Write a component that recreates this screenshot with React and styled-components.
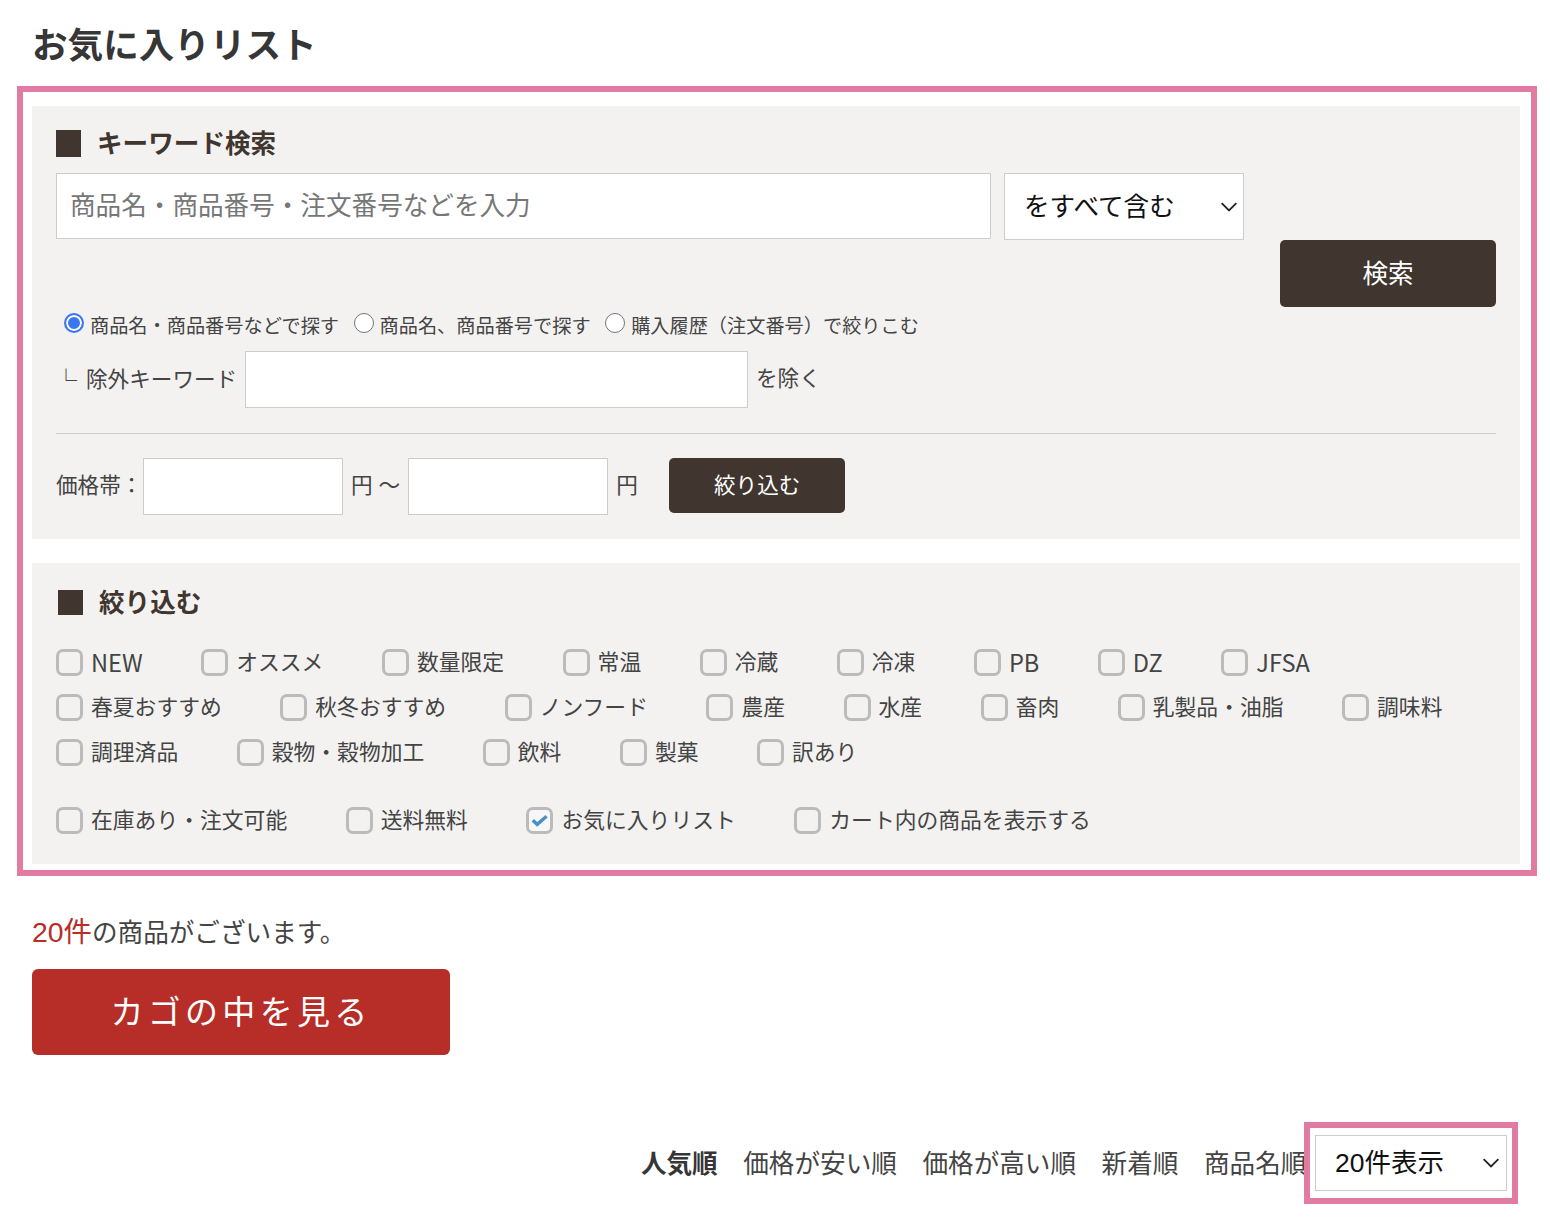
import React from "react";
import styled, { createGlobalStyle } from "styled-components";

const GlobalStyle = createGlobalStyle`
	html, body {
		margin: 0;
		padding: 0;
		background: #fff;
		color: #444;
		font-family: "Liberation Sans", "Noto Sans CJK JP", sans-serif;
	}
	* {
		box-sizing: border-box;
	}
`;

const Page = styled.div`
	width: 1550px;
	height: 1222px;
	overflow: hidden;
`;

const Title = styled.h1`
	margin: 0;
	padding-left: 32px;
	height: 86px;
	font-size: 35.6px;
	line-height: 92px;
	font-weight: 700;
	color: #363636;
`;

const PinkFrame = styled.div`
	margin-left: 17px;
	width: 1520px;
	height: 790px;
	border: 6px solid #e27ba1;
	padding: 14px 11px 6px 9px;
`;

const Panel = styled.section`
	background: #f3f2f0;
	padding: ${(p) => p.$padding};
	height: ${(p) => p.$height};
	margin-bottom: 24px;
`;

const Heading = styled.h2`
	display: flex;
	align-items: flex-start;
	gap: 16px;
	margin: 0;
	height: 28px;
	font-size: 25.6px;
	line-height: 28px;
	font-weight: 700;
	color: #40362f;
	&::before {
		content: "";
		width: 25px;
		height: ${(p) => p.$squareH};
		background: #40362f;
		margin-left: ${(p) => p.$indent || 0};
		margin-top: ${(p) => p.$squareTop || 0};
	}
`;

const SearchArea = styled.div`
	display: flex;
	gap: 36px;
	margin-top: 15px;
`;

const SearchLeft = styled.div`
	width: 1188px;
`;

const InputRow = styled.div`
	display: flex;
	gap: 13px;
	align-items: flex-start;
`;

const TextBox = styled.input`
	display: block;
	width: ${(p) => p.$width};
	height: ${(p) => p.$height};
	border: 1px solid #ccc;
	background: #fff;
	padding: 0 13px;
	font: inherit;
	font-size: 25.6px;
	color: #333;
	border-radius: 0;
	outline: none;
	&::placeholder {
		color: #777;
		opacity: 1;
	}
`;

const SelectWrap = styled.div`
	position: relative;
	width: ${(p) => p.$width};
	height: ${(p) => p.$height};
	svg {
		position: absolute;
		right: ${(p) => p.$arrowRight};
		top: 50%;
		transform: translateY(-50%);
		pointer-events: none;
	}
`;

const SelectBox = styled.select`
	appearance: none;
	width: 100%;
	height: 100%;
	border: 1px solid #ccc;
	border-radius: 0;
	background: #fff;
	padding: 0 0 0 19px;
	font: inherit;
	font-size: ${(p) => p.$size};
	color: #111;
	outline: none;
`;

const DarkButton = styled.button`
	flex: none;
	align-self: flex-start;
	width: ${(p) => p.$width};
	height: ${(p) => p.$height};
	margin-top: ${(p) => p.$top || 0};
	margin-left: ${(p) => p.$left || 0};
	border: none;
	border-radius: 5px;
	background: #40362f;
	color: #fff;
	font: inherit;
	font-size: ${(p) => p.$size};
	padding: 0 0 4px;
`;

const RadioRow = styled.div`
	display: flex;
	align-items: center;
	gap: 14.5px;
	padding-left: 8px;
	margin-top: 69px;
	height: 32px;
	font-size: 19.2px;
`;

const RadioLabel = styled.label`
	display: flex;
	align-items: center;
	gap: 6px;
`;

const Radio = styled.input.attrs({ type: "radio" })`
	appearance: none;
	flex: none;
	width: 20px;
	height: 20px;
	margin: 0 0 5px;
	border-radius: 50%;
	background: #fff;
	border: 1px solid #767676;
	&:checked {
		border: 2px solid #3a76f0;
		box-shadow: inset 0 0 0 2px #fff;
		background: #3a76f0;
	}
`;

const ExcludeRow = styled.div`
	display: flex;
	align-items: center;
	margin-top: 10px;
	font-size: 21.6px;
	height: 57px;
`;

const Corner = styled.span`
	width: 30px;
	margin-left: -1px;
	margin-right: 1px;
	margin-bottom: 4px;
	font-family: "Noto Sans CJK JP", sans-serif;
	font-size: 22px;
	line-height: 1;
`;

const ExcludeLabel = styled.span`
	width: 159px;
	padding-bottom: 5px;
	white-space: nowrap;
`;

const Suffix = styled.span`
	margin-left: 8px;
	padding-bottom: 6px;
`;

const Divider = styled.hr`
	margin: 25px 0 24px;
	border: none;
	border-top: 1px solid #ccc;
`;

const PriceRow = styled.div`
	display: flex;
	align-items: center;
	font-size: 21.6px;
	height: 57px;
`;

const PriceLabel = styled.span`
	width: 87px;
	padding-bottom: 6px;
	white-space: nowrap;
`;

const Between = styled.span`
	margin: 0 8px;
	padding-bottom: 6px;
	white-space: nowrap;
`;

const CheckRow = styled.div`
	display: flex;
	gap: 58.5px;
	margin-top: ${(p) => p.$top};
	height: 32px;
	align-items: center;
	font-size: 21.8px;
`;

const CheckLabel = styled.label`
	display: flex;
	align-items: center;
	gap: 8px;
	white-space: nowrap;
`;

const CheckName = styled.span`
	padding-bottom: 3px;
`;

const LatinName = styled.span`
	font-family: "Noto Sans CJK JP", sans-serif;
	font-size: 23.6px;
	line-height: 32px;
`;

const CheckBox = styled.input.attrs({ type: "checkbox" })`
	appearance: none;
	flex: none;
	width: 27px;
	height: 27px;
	margin: 0;
	border: 3px solid #bbb;
	border-radius: 7px;
	background: transparent;
	&:checked {
		background: #f7f7f7 url("data:image/svg+xml,%3Csvg xmlns='http://www.w3.org/2000/svg' viewBox='0 0 21 21'%3E%3Cpath d='M3.8 10.2l4.4 4.2 9.4-8.2' fill='none' stroke='%234a90c6' stroke-width='3.4'/%3E%3C/svg%3E") center / 100% no-repeat;
	}
`;

const ResultText = styled.p`
	margin: 38px 0 0 32px;
	font-size: 25.6px;
	line-height: 36px;
	height: 36px;
`;

const Count = styled.span`
	color: #b72d27;
	font-size: 28.4px;
`;

const CartButton = styled.button`
	display: block;
	margin: 19px 0 0 32px;
	width: 418px;
	height: 86px;
	border: none;
	border-radius: 6px;
	background: #b72d27;
	color: #fff;
	font: inherit;
	font-size: 33px;
	letter-spacing: 4.3px;
	padding: 0 0 4px;
`;

const SortBar = styled.div`
	display: flex;
	align-items: center;
	justify-content: flex-end;
	margin-top: 67px;
	padding-right: 32px;
	height: 82px;
`;

const SortLinks = styled.div`
	display: flex;
	gap: 25.6px;
	font-size: 25.6px;
	white-space: nowrap;
	margin-right: -2.4px;
	padding-bottom: 4px;
`;

const SortLink = styled.a`
	color: ${(p) => (p.$active ? "#363636" : "#444")};
	font-weight: ${(p) => (p.$active ? 700 : 400)};
`;

const PinkBox = styled.div`
	position: relative;
	width: 214px;
	height: 82px;
	border: 6px solid #e27ba1;
	padding: 7px 5px;
	background: #fff;
`;

const Chevron = ({ size = 18 }) => (
	<svg width={size} height={size * 0.6} viewBox="0 0 18 11" fill="none" stroke="#222" strokeWidth="1.8">
		<path d="M1.5 1.5 9 9l7.5-7.5" />
	</svg>
);

const tagRows = [
	["NEW", "オススメ", "数量限定", "常温", "冷蔵", "冷凍", "PB", "DZ", "JFSA"],
	["春夏おすすめ", "秋冬おすすめ", "ノンフード", "農産", "水産", "畜肉", "乳製品・油脂", "調味料"],
	["調理済品", "穀物・穀物加工", "飲料", "製菓", "訳あり"],
];

const stateRow = ["在庫あり・注文可能", "送料無料", "お気に入りリスト", "カート内の商品を表示する"];

const rowTops = ["29px", "13px", "13px"];

const App = () => {
	return (
		<Page>
			<GlobalStyle />
			<Title>お気に入りリスト</Title>
			<PinkFrame>
				<Panel $padding="24px 24px 0" $height="433px">
					<Heading $squareH="27px">キーワード検索</Heading>
					<SearchArea>
						<SearchLeft>
							<InputRow>
								<TextBox $width="935px" $height="66px" placeholder="商品名・商品番号・注文番号などを入力" />
								<SelectWrap $width="240px" $height="67px" $arrowRight="6px">
									<SelectBox $size="25.6px" defaultValue="all">
										<option value="all">をすべて含む</option>
									</SelectBox>
									<Chevron />
								</SelectWrap>
							</InputRow>
							<RadioRow>
								<RadioLabel>
									<Radio name="target" defaultChecked />
									商品名・商品番号などで探す
								</RadioLabel>
								<RadioLabel>
									<Radio name="target" />
									商品名、商品番号で探す
								</RadioLabel>
								<RadioLabel>
									<Radio name="target" />
									購入履歴（注文番号）で絞りこむ
								</RadioLabel>
							</RadioRow>
						</SearchLeft>
						<DarkButton $width="216px" $height="67px" $top="67px" $size="25.6px">
							検索
						</DarkButton>
					</SearchArea>
					<ExcludeRow>
						<Corner>└</Corner>
						<ExcludeLabel>除外キーワード</ExcludeLabel>
						<TextBox $width="503px" $height="57px" />
						<Suffix>を除く</Suffix>
					</ExcludeRow>
					<Divider />
					<PriceRow>
						<PriceLabel>価格帯：</PriceLabel>
						<TextBox $width="200px" $height="57px" />
						<Between>円 〜</Between>
						<TextBox $width="200px" $height="57px" />
						<Suffix>円</Suffix>
						<DarkButton $width="176px" $height="55px" $left="31.4px" $size="21.6px">
							絞り込む
						</DarkButton>
					</PriceRow>
				</Panel>
				<Panel $padding="26px 24px 0" $height="301px">
					<Heading $squareH="25px" $indent="2px" $squareTop="1px">絞り込む</Heading>
					{tagRows.map((row, i) => (
						<CheckRow key={i} $top={rowTops[i]}>
							{row.map((name) => (
								<CheckLabel key={name}>
									<CheckBox />
									{/^[A-Z]+$/.test(name) ? <LatinName>{name}</LatinName> : <CheckName>{name}</CheckName>}
								</CheckLabel>
							))}
						</CheckRow>
					))}
					<CheckRow $top="36px">
						{stateRow.map((name) => (
							<CheckLabel key={name}>
								<CheckBox defaultChecked={name === "お気に入りリスト"} />
								<CheckName>{name}</CheckName>
							</CheckLabel>
						))}
					</CheckRow>
				</Panel>
			</PinkFrame>
			<ResultText>
				<Count>20件</Count>の商品がございます。
			</ResultText>
			<CartButton>カゴの中を見る</CartButton>
			<SortBar>
				<SortLinks>
					<SortLink $active>人気順</SortLink>
					<SortLink>価格が安い順</SortLink>
					<SortLink>価格が高い順</SortLink>
					<SortLink>新着順</SortLink>
					<SortLink>商品名順</SortLink>
				</SortLinks>
				<PinkBox>
					<SelectWrap $width="192px" $height="56px" $arrowRight="7px">
						<SelectBox $size="26.5px" defaultValue="20">
							<option value="20">20件表示</option>
						</SelectBox>
						<Chevron />
					</SelectWrap>
				</PinkBox>
			</SortBar>
		</Page>
	);
};

export default App;
